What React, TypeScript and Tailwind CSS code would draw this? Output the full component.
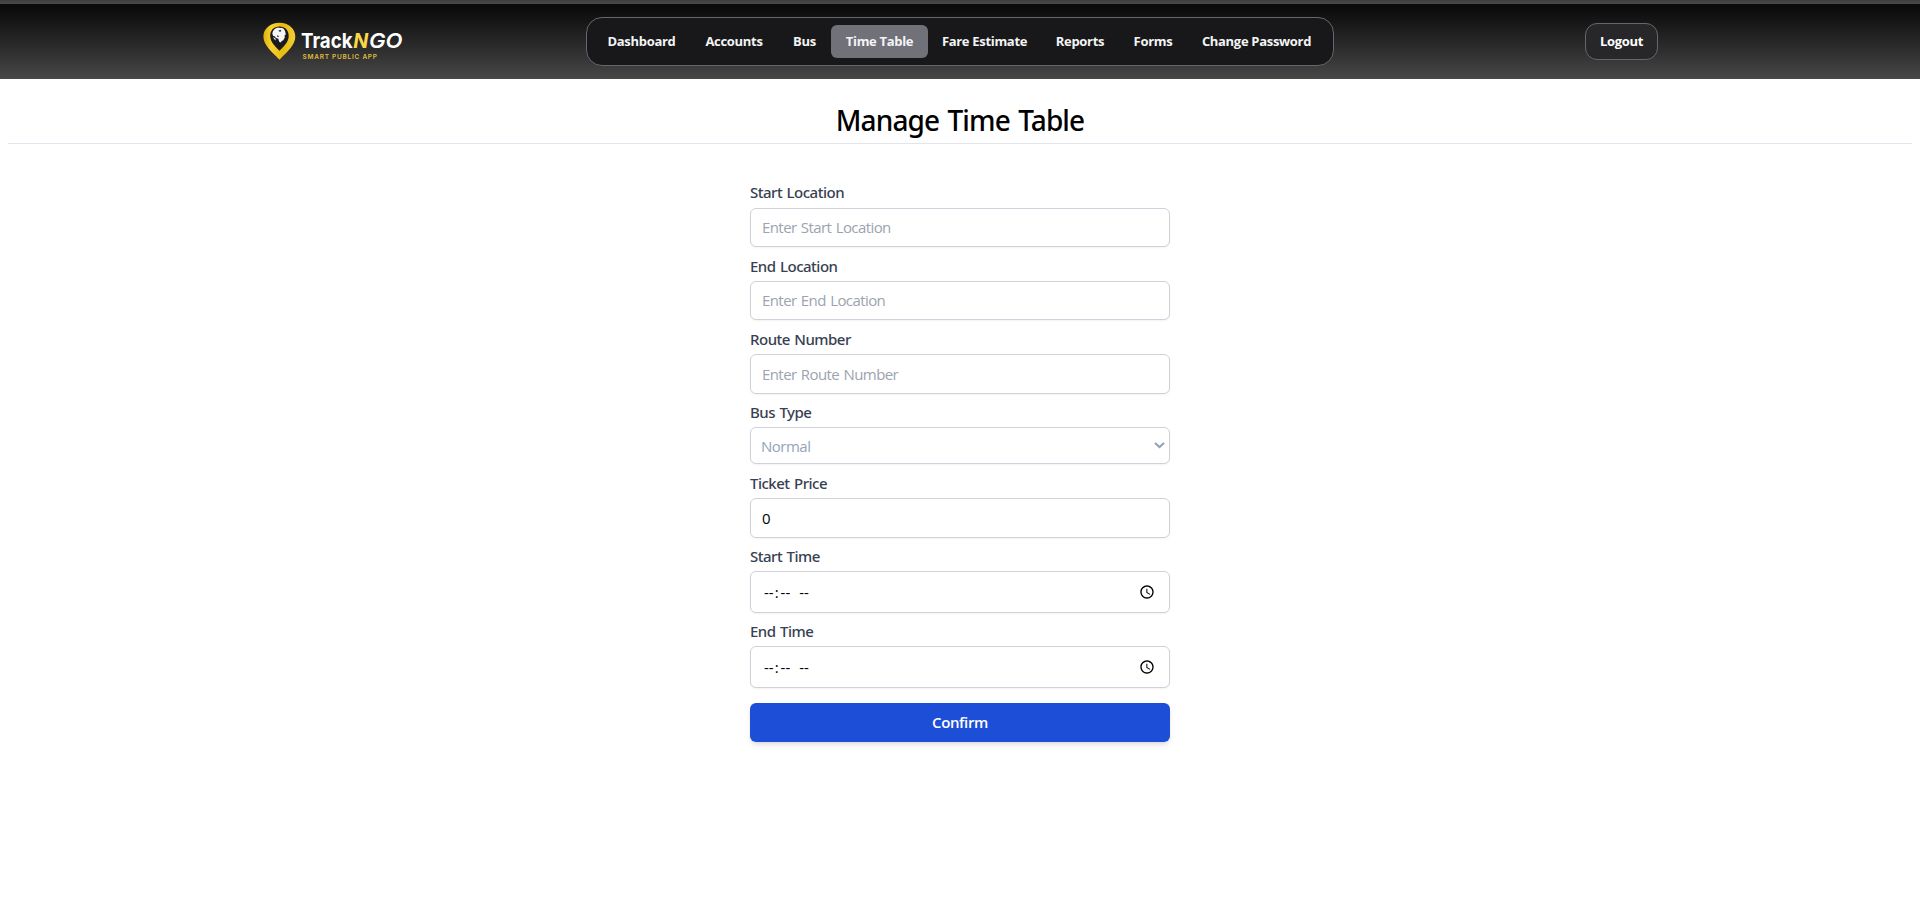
import type { ReactNode } from 'react';

const navItems = [
  { label: 'Dashboard', box: 'w-[97px]' },
  { label: 'Accounts', box: 'w-[88px]' },
  { label: 'Bus', box: 'w-[53px]' },
  { label: 'Time Table', box: 'w-[97px]', active: true },
  { label: 'Fare Estimate', box: 'w-[113px]' },
  { label: 'Reports', box: 'w-[78px]' },
  { label: 'Forms', box: 'w-[68px]' },
  { label: 'Change Password', box: 'w-[139px]' },
];

const fieldBase =
  'block w-full rounded-md border border-[#d1d1db] bg-white text-[15px] text-black shadow-[0_1px_2px_rgba(0,0,0,0.05)] outline-none placeholder:text-[#9ca3af]';
const textField = `${fieldBase} px-[11px] tracking-[-0.58px] [word-spacing:1px]`;
const timeField = `${fieldBase} px-[11px] [&::-webkit-datetime-edit-hour-field]:ml-px [&::-webkit-datetime-edit-minute-field]:ml-px [&::-webkit-datetime-edit-ampm-field]:ml-[5px]`;

function Logo() {
  return (
    <svg className="block h-[46px] w-[146px]" viewBox="0 0 146 46" role="img" aria-label="TrackNGO">
      <defs>
        <linearGradient id="pin" x1="0" y1="0" x2="1" y2="0">
          <stop offset="0" stopColor="#e0b010" />
          <stop offset="0.25" stopColor="#f7d32e" />
          <stop offset="0.6" stopColor="#e8bb0c" />
          <stop offset="1" stopColor="#f3cd35" />
        </linearGradient>
      </defs>
      <path d="M19.500 4.800C10.500 4.800 3.400 10.600 3.400 18.600c0 8.600 8.600 15.400 16.100 23.200C27 34 35.300 27.200 35.300 18.600 35.300 10.600 28.500 4.800 19.500 4.800z" fill="url(#pin)" />
      <path d="M19.500 8.400c-5.600 0-9.300 3.800-9.300 9.300 0 5.800 4.600 10.600 9.300 15 4.700-4.400 9.200-9.200 9.200-15 0-5.500-3.700-9.300-9.200-9.300z" fill="#1b1b1d" />
      <path d="M12.300 15.500c.4-2.900 2.700-5.400 5.600-5.900l2.400.5 1.400-.4 1.900 1.100 1.500 2.200.7 3.400-1.300 1.200.4 1.700-1.600 3-1.700.6-.6 1.500-1.800-.7-.9-3-2.300-.8-1.300-1.700-1.500-.3z" fill="#f6f6f6" />
      <path d="M18.300 12.600l2.400-.8.700 1.300-1.500.9zM17.200 17.300l1.800.6-.6 1.300-1.500-.8z" fill="#3c3c40" />
      <path d="M13 18.900l2.300 1.400.8 2.300-2-1.400z" fill="#d8d8d8" />
      <text y="30" fontFamily="Inter, sans-serif" fontWeight="700" fontSize="20.500" fill="#fff">
        <tspan x="41" textLength="51.500" lengthAdjust="spacingAndGlyphs">Track</tspan>
        <tspan x="93.200" fontStyle="italic" fill="#fbd748" textLength="15" lengthAdjust="spacingAndGlyphs">N</tspan>
        <tspan x="109" fontStyle="italic" fontWeight="600" textLength="33.500" lengthAdjust="spacingAndGlyphs">GO</tspan>
      </text>
      <text x="42.500" y="41.300" fontFamily="Inter, sans-serif" fontWeight="600" fontSize="6.500" fill="#dfbd3c" textLength="74.500" lengthAdjust="spacing">SMART PUBLIC APP</text>
    </svg>
  );
}

function Field({ label, labelBox = 'h-[34px] pt-[9px]', children }: { label: string; labelBox?: string; children: ReactNode }) {
  return (
    <div>
      <label className={`block font-['Noto_Sans',sans-serif] text-[15px] leading-[20px] font-medium tracking-[-0.5px] [word-spacing:1px] text-[#374151] ${labelBox}`}>{label}</label>
      {children}
    </div>
  );
}

export default function App() {
  return (
    <div className="min-h-screen bg-white font-['Open_Sans','Noto_Sans',sans-serif]">
      <div className="h-1 bg-linear-to-b from-[#3e3e3e] to-[#4a4a4a]" />
      <header className="flex h-[75px] items-start bg-linear-to-b from-[#09090a] to-[#484848] pl-[260px]">
        <div className="mt-[14px] w-[326px]">
          <Logo />
        </div>
        <nav className="mt-[13px] flex h-[49px] w-[748px] items-center rounded-2xl border border-[#66666e] bg-[#18181b] pl-[6px]">
          {navItems.map((item) => (
            <a
              key={item.label}
              className={`flex h-[33px] items-center justify-center rounded-md text-[13px] font-bold tracking-[-0.31px] whitespace-nowrap text-[#f4f4f5] ${item.box} ${item.active ? 'bg-[#71717a]' : ''}`}
            >
              {item.label}
            </a>
          ))}
        </nav>
        <button className="mt-[19px] ml-[251px] h-[37px] w-[73px] rounded-xl border border-[#66666e] bg-[#27272a] text-[13px] font-bold tracking-[-0.3px] text-white">
          Logout
        </button>
      </header>

      <main className="px-2">
        <h1 className="h-[65px] border-b border-[#e2e4ee] pt-[21px] text-center font-['Noto_Sans',sans-serif] text-[28px] leading-[40px] font-medium tracking-[-0.9px] [word-spacing:2px] text-black">
          Manage Time Table
        </h1>
        <form className="mx-auto w-[420px] pt-[30px]">
          <Field label="Start Location" labelBox="h-[34px] pt-[8px]">
            <input className={`${textField} h-[39px] pb-[2px]`} placeholder="Enter Start Location" />
          </Field>
          <Field label="End Location">
            <input className={`${textField} h-[39px] pb-[2px]`} placeholder="Enter End Location" />
          </Field>
          <Field label="Route Number">
            <input className={`${textField} h-[40px]`} placeholder="Enter Route Number" />
          </Field>
          <Field label="Bus Type" labelBox="h-[33px] pt-[8px]">
            <div className="relative">
              <select className="block h-[37px] w-full appearance-none rounded-md border border-[#d1d1db] bg-white pt-[2px] pl-[10px] text-[15px] tracking-[-0.5px] text-[#94a3b8] shadow-[0_1px_2px_rgba(0,0,0,0.05)]">
                <option>Normal</option>
              </select>
              <svg className="pointer-events-none absolute top-[15px] right-[5px] h-[7px] w-[11px]" viewBox="0 0 11 7" fill="none" stroke="#94a3b8" strokeWidth="2.200">
                <path d="M1 1l4.500 4L10 1" />
              </svg>
            </div>
          </Field>
          <Field label="Ticket Price">
            <input className={`${textField} h-[40px]`} defaultValue="0" />
          </Field>
          <Field label="Start Time" labelBox="h-[33px] pt-[8px]">
            <input type="time" className={`${timeField} h-[42px]`} />
          </Field>
          <Field label="End Time" labelBox="h-[33px] pt-[8px]">
            <input type="time" className={`${timeField} h-[42px]`} />
          </Field>
          <button
            type="button"
            className="mt-[15px] block h-[39px] w-full rounded-md bg-[#1d4ed8] text-[15px] font-semibold tracking-[-0.4px] text-white shadow-md"
          >
            Confirm
          </button>
        </form>
      </main>
    </div>
  );
}
